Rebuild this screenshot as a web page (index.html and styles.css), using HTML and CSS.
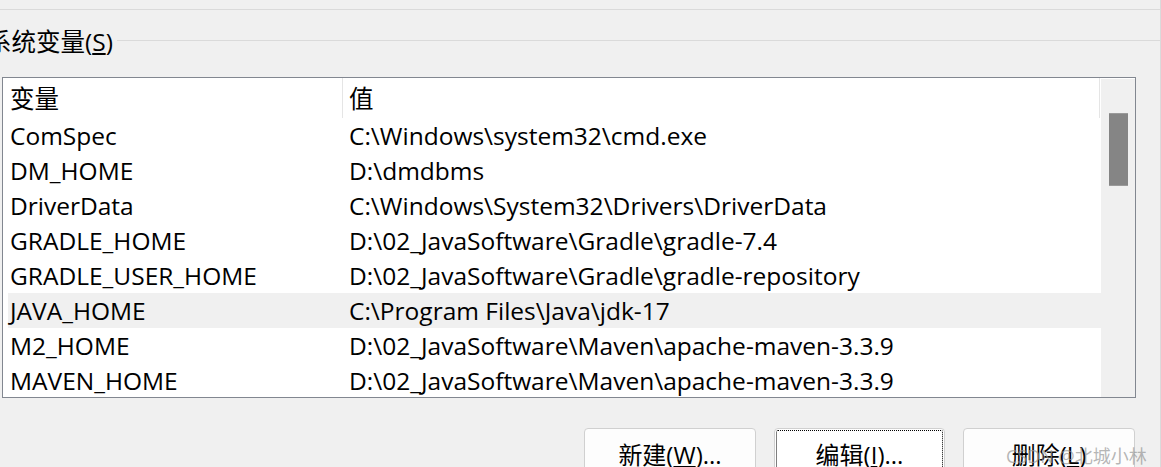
FILE: index.html
```html
<!DOCTYPE html>
<html lang="zh-CN">
<head>
<meta charset="utf-8">
<title>系统变量</title>
<link rel="stylesheet" href="styles.css">
</head>
<body>
<div class="frame">
  <div class="top-rule"></div>
  <div class="legend">
    <span class="legend-label">系统变量(<u>S</u>)</span>
    <span class="legend-line"></span>
  </div>
  <div class="listbox">
    <div class="list">
      <div class="row head">
        <div class="cell c1">变量</div>
        <div class="cell c2">值</div>
      </div>
      <div class="row"><div class="cell c1">ComSpec</div><div class="cell c2">C:\Windows\system32\cmd.exe</div></div>
      <div class="row"><div class="cell c1">DM_HOME</div><div class="cell c2">D:\dmdbms</div></div>
      <div class="row"><div class="cell c1">DriverData</div><div class="cell c2">C:\Windows\System32\Drivers\DriverData</div></div>
      <div class="row"><div class="cell c1">GRADLE_HOME</div><div class="cell c2">D:\02_JavaSoftware\Gradle\gradle-7.4</div></div>
      <div class="row"><div class="cell c1">GRADLE_USER_HOME</div><div class="cell c2">D:\02_JavaSoftware\Gradle\gradle-repository</div></div>
      <div class="row hover"><div class="cell c1">JAVA_HOME</div><div class="cell c2">C:\Program Files\Java\jdk-17</div></div>
      <div class="row"><div class="cell c1">M2_HOME</div><div class="cell c2">D:\02_JavaSoftware\Maven\apache-maven-3.3.9</div></div>
      <div class="row"><div class="cell c1">MAVEN_HOME</div><div class="cell c2">D:\02_JavaSoftware\Maven\apache-maven-3.3.9</div></div>
    </div>
    <div class="scrollbar"><div class="thumb"></div></div>
  </div>
  <div class="buttons">
    <button class="btn">新建(<u>W</u>)...</button>
    <button class="btn focus">编辑(<u>I</u>)...</button>
    <button class="btn">删除(<u>L</u>)</button>
  </div>
  <div class="watermark">CSDN @北城小林</div>
</div>
</body>
</html>
```

FILE: styles.css
```css
html, body {
  margin: 0;
  padding: 0;
  background: #f0f0f0;
  overflow: hidden;
}
body {
  font-family: "Open Sans", "Noto Sans CJK SC", sans-serif;
  font-size: 24.5px;
  color: #000;
}
.frame {
  position: relative;
  width: 1160px;
  height: 467px;
  border-right: 1px solid #dadada;
  overflow: hidden;
}
.top-rule {
  height: 9px;
  border-bottom: 1px solid #dadada;
}
.legend {
  display: flex;
  height: 62px;
  align-items: center;
}
.legend-label {
  margin-left: -13px;
  margin-top: 2px;
  line-height: 30px;
  white-space: nowrap;
}
.legend-line {
  flex: 1;
  height: 1px;
  background: #dadada;
  margin-left: 4px;
  margin-top: -1px;
}
.listbox {
  margin-top: 5px;
  margin-left: 2px;
  width: 1134px;
  height: 321px;
  box-sizing: border-box;
  border: 1px solid #828790;
  background: #fff;
  display: flex;
  overflow: hidden;
}
.list {
  width: 1098px;
  padding-left: 5px;
  box-sizing: border-box;
}
.row {
  display: grid;
  grid-template-columns: 335px 757px;
  height: 35px;
  align-items: center;
  white-space: nowrap;
}
.row.head {
  height: 40px;
  align-items: stretch;
}
.row.head .cell {
  display: flex;
  align-items: center;
  border-right: 1px solid #e5e5e5;
}
.row.hover {
  background: #f0f0f0;
}
.c1 {
  padding-left: 2px;
}
.c2 {
  padding-left: 6px;
}
.cell {
  line-height: 35px;
}
.scrollbar {
  width: 34px;
  margin-top: 1px;
  background: #f0f0f0;
  display: flex;
  justify-content: center;
}
.thumb {
  width: 19px;
  height: 73px;
  margin-top: 34px;
  background: #858585;
  border-top: 1px solid #9a9a9a;
  border-bottom: 1px solid #9a9a9a;
  box-sizing: border-box;
}
.buttons {
  margin-top: 30px;
  margin-left: 2px;
  width: 1133px;
  display: flex;
  justify-content: flex-end;
  gap: 18px;
}
.btn {
  width: 172px;
  height: 54px;
  box-sizing: border-box;
  border: 1px solid #d0d0d0;
  border-radius: 4px;
  background: #fdfdfd;
  font-family: "Open Sans", "Noto Sans CJK SC", sans-serif;
  font-size: 24px;
  color: #000;
  padding: 0;
  line-height: 52px;
}
.btn.focus {
  width: 171px;
  outline: 1px dotted #000;
  outline-offset: -3px;
  background: #fff;
}
.watermark {
  position: absolute;
  left: 1006px;
  top: 443px;
  font-size: 18px;
  color: rgba(150, 150, 150, 0.7);
  white-space: nowrap;
  line-height: 26px;
}
```
